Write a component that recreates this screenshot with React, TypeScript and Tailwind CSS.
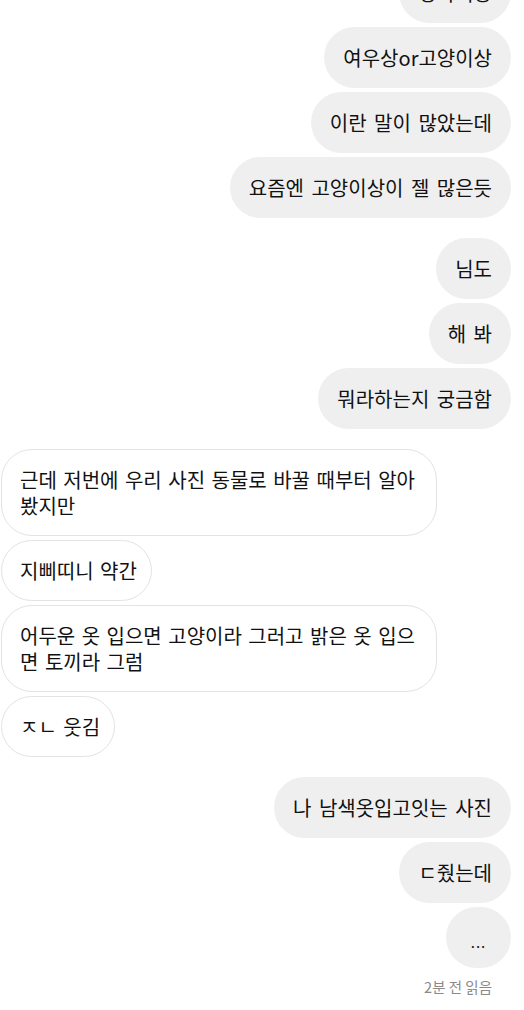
import React from "react";

type Msg = { text: string; mine: boolean; dots?: boolean };

const groups: Msg[][] = [
  [
    { text: "강아지상", mine: true },
    { text: "여우상or고양이상", mine: true },
    { text: "이란 말이 많았는데", mine: true },
    { text: "요즘엔 고양이상이 젤 많은듯", mine: true },
  ],
  [
    { text: "님도", mine: true },
    { text: "해 봐", mine: true },
    { text: "뭐라하는지 궁금함", mine: true },
  ],
  [
    { text: "근데 저번에 우리 사진 동물로 바꿀 때부터 알아봤지만", mine: false },
    { text: "지삐띠니 약간", mine: false },
    { text: "어두운 옷 입으면 고양이라 그러고 밝은 옷 입으면 토끼라 그럼", mine: false },
    { text: "ㅈㄴ 웃김", mine: false },
  ],
  [
    { text: "나 남색옷입고잇는 사진", mine: true },
    { text: "ㄷ줬는데", mine: true },
    { text: "...", mine: true, dots: true },
  ],
];

const Bubble = ({ msg }: { msg: Msg }) => {
  if (msg.dots) {
    return (
      <div className="flex justify-end pr-[13px]">
        <div className="flex h-[61px] w-[65px] items-center justify-center rounded-full bg-[#efefef] pt-[8px] text-[15px] leading-[20px] tracking-[1px] text-[#111]">
          {msg.text}
        </div>
      </div>
    );
  }
  if (msg.mine) {
    return (
      <div className="flex justify-end pr-[13px]">
        <div className="rounded-[31px] bg-[#efefef] px-[19px] py-[17.5px] text-[20px] leading-[26px] [word-spacing:3px] text-[#111]">
          {msg.text}
        </div>
      </div>
    );
  }
  return (
    <div className="flex justify-start pl-[1px]">
      <div className="max-w-[436px] rounded-[31px] border border-[#e3e3e3] bg-white pl-[18px] pr-[14px] py-[16.5px] text-[20px] leading-[26px] [word-spacing:2px] text-[#111]">
        {msg.text}
      </div>
    </div>
  );
};

export default function App() {
  return (
    <div
      className="h-[1010px] w-[524px] overflow-hidden bg-white"
      style={{ fontFamily: '"Noto Sans CJK KR", "Noto Sans", sans-serif' }}
    >
      <div className="-mt-[38px] flex flex-col gap-[20px]">
        {groups.map((g, i) => (
          <div key={i} className="flex flex-col gap-[4px]">
            {g.map((m, j) => (
              <Bubble key={j} msg={m} />
            ))}
          </div>
        ))}
      </div>
      <div className="mt-[10px] pr-[32px] text-right text-[14.5px] leading-[18px] text-[#8a8a8a]">
        2분 전 읽음
      </div>
    </div>
  );
}
